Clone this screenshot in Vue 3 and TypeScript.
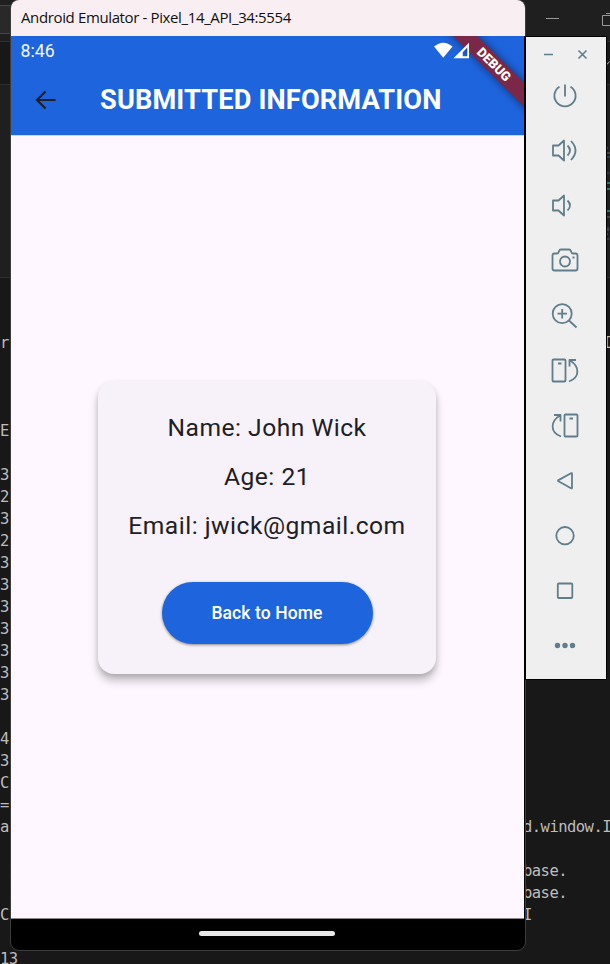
<script setup lang="ts">
interface Row { left: string; right?: string }
interface Tool { name: string; d: string }

const rows: Row[] = [
  { left: "r'", right: '         I' }, { left: '' }, { left: '' }, { left: '' },
  { left: 'EI' }, { left: '' }, { left: '3' }, { left: '2' }, { left: '3' }, { left: '2' },
  { left: '3' }, { left: '3' }, { left: '3' }, { left: '3' }, { left: '3' }, { left: '3' }, { left: '3' },
  { left: '' }, { left: '4' }, { left: '3' }, { left: 'C' }, { left: '=' },
  { left: 'a', right: 'd.window.I' }, { left: '' },
  { left: ' I', right: 'base.' }, { left: ' I', right: 'base.' },
  { left: 'C', right: 'I' }, { left: '' }, { left: '13' },
]

const tools: Tool[] = [
  { name: 'Power', d: 'M14 3.500v12M8.500 5.700a10.600 10.600 0 1 0 11 0' },
  { name: 'Volume up', d: 'M2 9.500h5.500l5.500-5v20l-5.500-5H2zM16.500 9.500q5 5 0 10M20 5q9 9.500 0 19' },
  { name: 'Volume down', d: 'M2 9.500h5.500l5.500-5v20l-5.500-5H2zM16.500 9.500q5 5 0 10' },
  { name: 'Screenshot', d: 'M3.500 7.500H6q1.500 0 2-2.200Q8.500 3.500 10 3.500h8q1.500 0 2 1.800q.5 2.200 2 2.200h2.500q2 0 2 2v13q0 2-2 2h-21q-2 0-2-2v-13q0-2 2-2zM14 10.500a5 5 0 1 0 0 10a5 5 0 1 0 0-10M21.500 11.500h2' },
  { name: 'Zoom', d: 'M11.200 3.200a9.500 9.500 0 1 0 0 19a9.500 9.500 0 1 0 0-19M18 19.500l7.500 7M11.200 8v9.500M6.500 12.700H16' },
  { name: 'Rotate left', d: 'M2.500 3.500h11q1 0 1 1v20q0 1-1 1h-11q-1 0-1-1v-20q0-1 1-1zM7 7.500h3.500M18 25.500c11-4 11-15 1-21M25 4h-6.500v6.500' },
  { name: 'Rotate right', d: 'M14.500 3.500h11q1 0 1 1v20q0 1-1 1h-11q-1 0-1-1v-20q0-1 1-1zM18.500 7.500H22M10 25.500c-11-4-11-15-1-21M3 4h6.500v6.500' },
  { name: 'Back', d: 'M20 7.200q1-.5 1 .5v14q0 1-1 .5L7.500 15.300q-1-.6 0-1.200z' },
  { name: 'Home', d: 'M14 6a8.700 8.700 0 1 0 0 17.400a8.700 8.700 0 1 0 0-17.400' },
  { name: 'Overview', d: 'M7.800 7.500h12.500q1 0 1 1V21q0 1-1 1H7.800q-1 0-1-1V8.500q0-1 1-1z' },
]

const details: string[] = ['Name: John Wick', 'Age: 21', 'Email: jwick@gmail.com']
</script>

<template>
  <div class="desktop">
    <div class="editor">
      <div class="editor-top">
        <div class="search"></div>
        <svg class="caption" viewBox="0 0 70 36">
          <path d="M6 18.500h13M66 13.500H70M62.500 25.500V15.500h9M62.500 25.500H70" />
        </svg>
      </div>
      <div class="tabs">
        <svg class="check" viewBox="0 0 5 8"><path d="M0 6.500L4.500 1.500" /></svg>
      </div>
      <div class="code">
        <svg class="minimap" viewBox="0 0 5 110">
          <path class="white" d="M0 17h3M0 22h5M0 103h3M0 99h4M0 86h5" />
          <path class="teal" d="M0 52h5M0 58h5M0 80h5" />
          <path class="blue" d="M0 26h5M0 42h4M0 97h4M0 108h4" />
        </svg>
      </div>
      <div class="terminal">
        <div v-for="(row, i) in rows" :key="i" class="line">
          <span>{{ row.left }}</span><span>{{ row.right }}</span>
        </div>
      </div>
    </div>

    <section class="phone">
      <header class="titlebar">Android Emulator - Pixel_14_API_34:5554</header>
      <div class="screen">
        <div class="appbar">
          <div class="status">
            <span>8:46</span>
            <svg class="signals" viewBox="0 0 38 18">
              <path d="M0 4.500Q9.500-3.500 19 4.500L9.500 16z" />
              <path fill-rule="evenodd" d="M20 16.500L36 .5v16zM29.500 14.300h4.700V5.500l-4.700 4.700z" />
            </svg>
          </div>
          <div class="heading">
            <svg class="arrow" viewBox="0 0 22 20"><path d="M20.500 10H2M10.500 1.500L2 10l8.500 8.500" /></svg>
            <h1>SUBMITTED INFORMATION</h1>
          </div>
          <div class="debug"><span>DEBUG</span></div>
        </div>
        <main class="body">
          <div class="card">
            <p v-for="item in details" :key="item">{{ item }}</p>
            <button type="button">Back to Home</button>
          </div>
        </main>
      </div>
      <footer class="nav"><i></i></footer>
    </section>

    <aside class="toolbar">
      <div class="window-buttons">
        <svg viewBox="0 0 50 14"><path d="M3 6.500h9M37.500 2.500l8 8M45.500 2.500l-8 8" /></svg>
      </div>
      <div v-for="tool in tools" :key="tool.name" class="tool">
        <svg viewBox="0 0 28 29"><path :d="tool.d" /></svg>
      </div>
      <div class="tool">
        <svg viewBox="0 0 28 29"><g class="dots"><circle cx="6.500" cy="14.500" r="2.700" /><circle cx="14" cy="14.500" r="2.700" /><circle cx="21.500" cy="14.500" r="2.700" /></g></svg>
      </div>
    </aside>
  </div>
</template>

<style>
body { background: #181818; overflow: hidden; }
</style>

<style scoped>
.desktop { position: relative; width: 610px; height: 964px; overflow: hidden; background: #181818; font-family: Roboto, sans-serif; }
.desktop svg { display: block; fill: none; }
.editor { display: flex; flex-direction: column; height: 964px; }
.editor > div { flex: none; }
.editor-top { box-sizing: border-box; height: 42px; display: flex; justify-content: space-between; background: #1f1f1f; border-bottom: 1px solid #2f2f2f; }
.search { box-sizing: border-box; width: 40px; height: 29px; margin-top: 5px; background: #292929; border: solid #454545; border-width: 1px 0; }
.caption { width: 70px; height: 36px; stroke: #999; }
.tabs { box-sizing: border-box; height: 43px; display: flex; justify-content: flex-end; padding-top: 18px; border-bottom: 1px solid #2f2f2f; }
.check { width: 5px; height: 8px; stroke: #bbb; }
.code { box-sizing: border-box; height: 193px; background: #1f1f1f; border-bottom: 1px solid #2f2f2f; display: flex; justify-content: flex-end; padding-top: 46px; }
.minimap { width: 5px; height: 110px; opacity: .65; }
.white { stroke: #999; }
.teal { stroke: #3fa38e; stroke-width: 2; }
.blue { stroke: #4a7ba8; }
.terminal { padding-top: 54px; }
.line { display: grid; grid-template-columns: 523px 87px; height: 22px; line-height: 22px; white-space: pre; overflow: hidden; color: #bdbdbd; font-family: "DejaVu Sans Mono", monospace; font-size: 15.500px; letter-spacing: -.53px; }

.phone { position: absolute; left: 10px; top: -1px; box-sizing: border-box; width: 516px; height: 952px; display: flex; flex-direction: column; border: 1px solid #3c3c3c; border-radius: 9px; overflow: hidden; background: #000; }
.titlebar { box-sizing: border-box; flex: none; height: 36px; padding-left: 10px; background: #f9eff3; color: #111; font: 15px/35px "Open Sans", sans-serif; white-space: nowrap; letter-spacing: -.37px; }
.screen { flex: none; width: 513px; height: 883px; display: flex; flex-direction: column; background: #fef7ff; border-bottom: 1px solid #8b878c; box-sizing: border-box; }
.appbar { position: relative; box-sizing: border-box; height: 100px; overflow: hidden; background: #1e64dd; border-bottom: 1px solid #c5d3f7; }
.status { position: relative; z-index: 1; display: flex; justify-content: space-between; height: 31px; padding: 0 53px 0 9.500px; color: #f2f6ff; font-size: 17.700px; line-height: 31px; }
.signals { width: 37px; height: 18px; margin-top: 6px; }
.desktop .signals { fill: #fff; }
.heading { display: flex; align-items: center; height: 66px; }
.arrow { width: 22px; height: 20px; margin-left: 24px; stroke: #1d2028; stroke-width: 2.200; }
h1 { margin: 0 0 0 43px; color: #fff; font-size: 27.200px; line-height: 32px; font-weight: 700; letter-spacing: .14px; white-space: nowrap; }
.debug { position: absolute; right: -45px; top: 20px; width: 150px; height: 17px; transform: rotate(45deg); background: #7b2848; box-shadow: 0 0 8px rgba(0,0,0,.5); text-align: center; color: #fff; font-size: 13px; font-weight: 900; line-height: 17px; }
.body { flex: 1; display: flex; justify-content: center; align-items: center; padding-right: 1px; }
.card { box-sizing: border-box; width: 338px; height: 293px; display: flex; flex-direction: column; align-items: center; padding-top: 22px; border-radius: 16px; background: #f7f1f9; box-shadow: 0 7px 9px rgba(0,0,0,.23), 0 2px 5px rgba(0,0,0,.12); }
.card p { margin: 0; height: 49px; line-height: 49px; color: #202024; font-size: 24.600px; letter-spacing: .5px; white-space: nowrap; }
button { width: 211px; height: 62px; margin-top: 32px; padding: 0; border: 0; border-radius: 31px; background: #1e64dd; color: #fff; font: 500 17.500px Roboto, sans-serif; letter-spacing: .1px; box-shadow: 0 1px 3px rgba(0,0,0,.45); }
.nav { flex: 1; display: flex; justify-content: center; padding: 12px 2px 0 0; }
.nav i { width: 136px; height: 5px; border-radius: 3px; background: #e8e6e8; }

.toolbar { position: absolute; left: 524px; top: 36px; box-sizing: border-box; width: 83px; height: 644px; border: solid #000; border-width: 1px 1px 1px 2px; background: #efefef; display: flex; flex-direction: column; }
.window-buttons { height: 31px; padding: 11px 0 0 15px; box-sizing: border-box; }
.window-buttons svg { width: 50px; height: 14px; stroke: #607d8b; stroke-width: 1.600; }
.tool { height: 55px; display: flex; justify-content: center; align-items: center; padding-right: 2px; }
.tool svg { width: 28px; height: 29px; stroke: #607d8b; stroke-width: 1.800; stroke-linejoin: round; }
.tool .dots { fill: #607d8b; stroke: none; }
</style>
